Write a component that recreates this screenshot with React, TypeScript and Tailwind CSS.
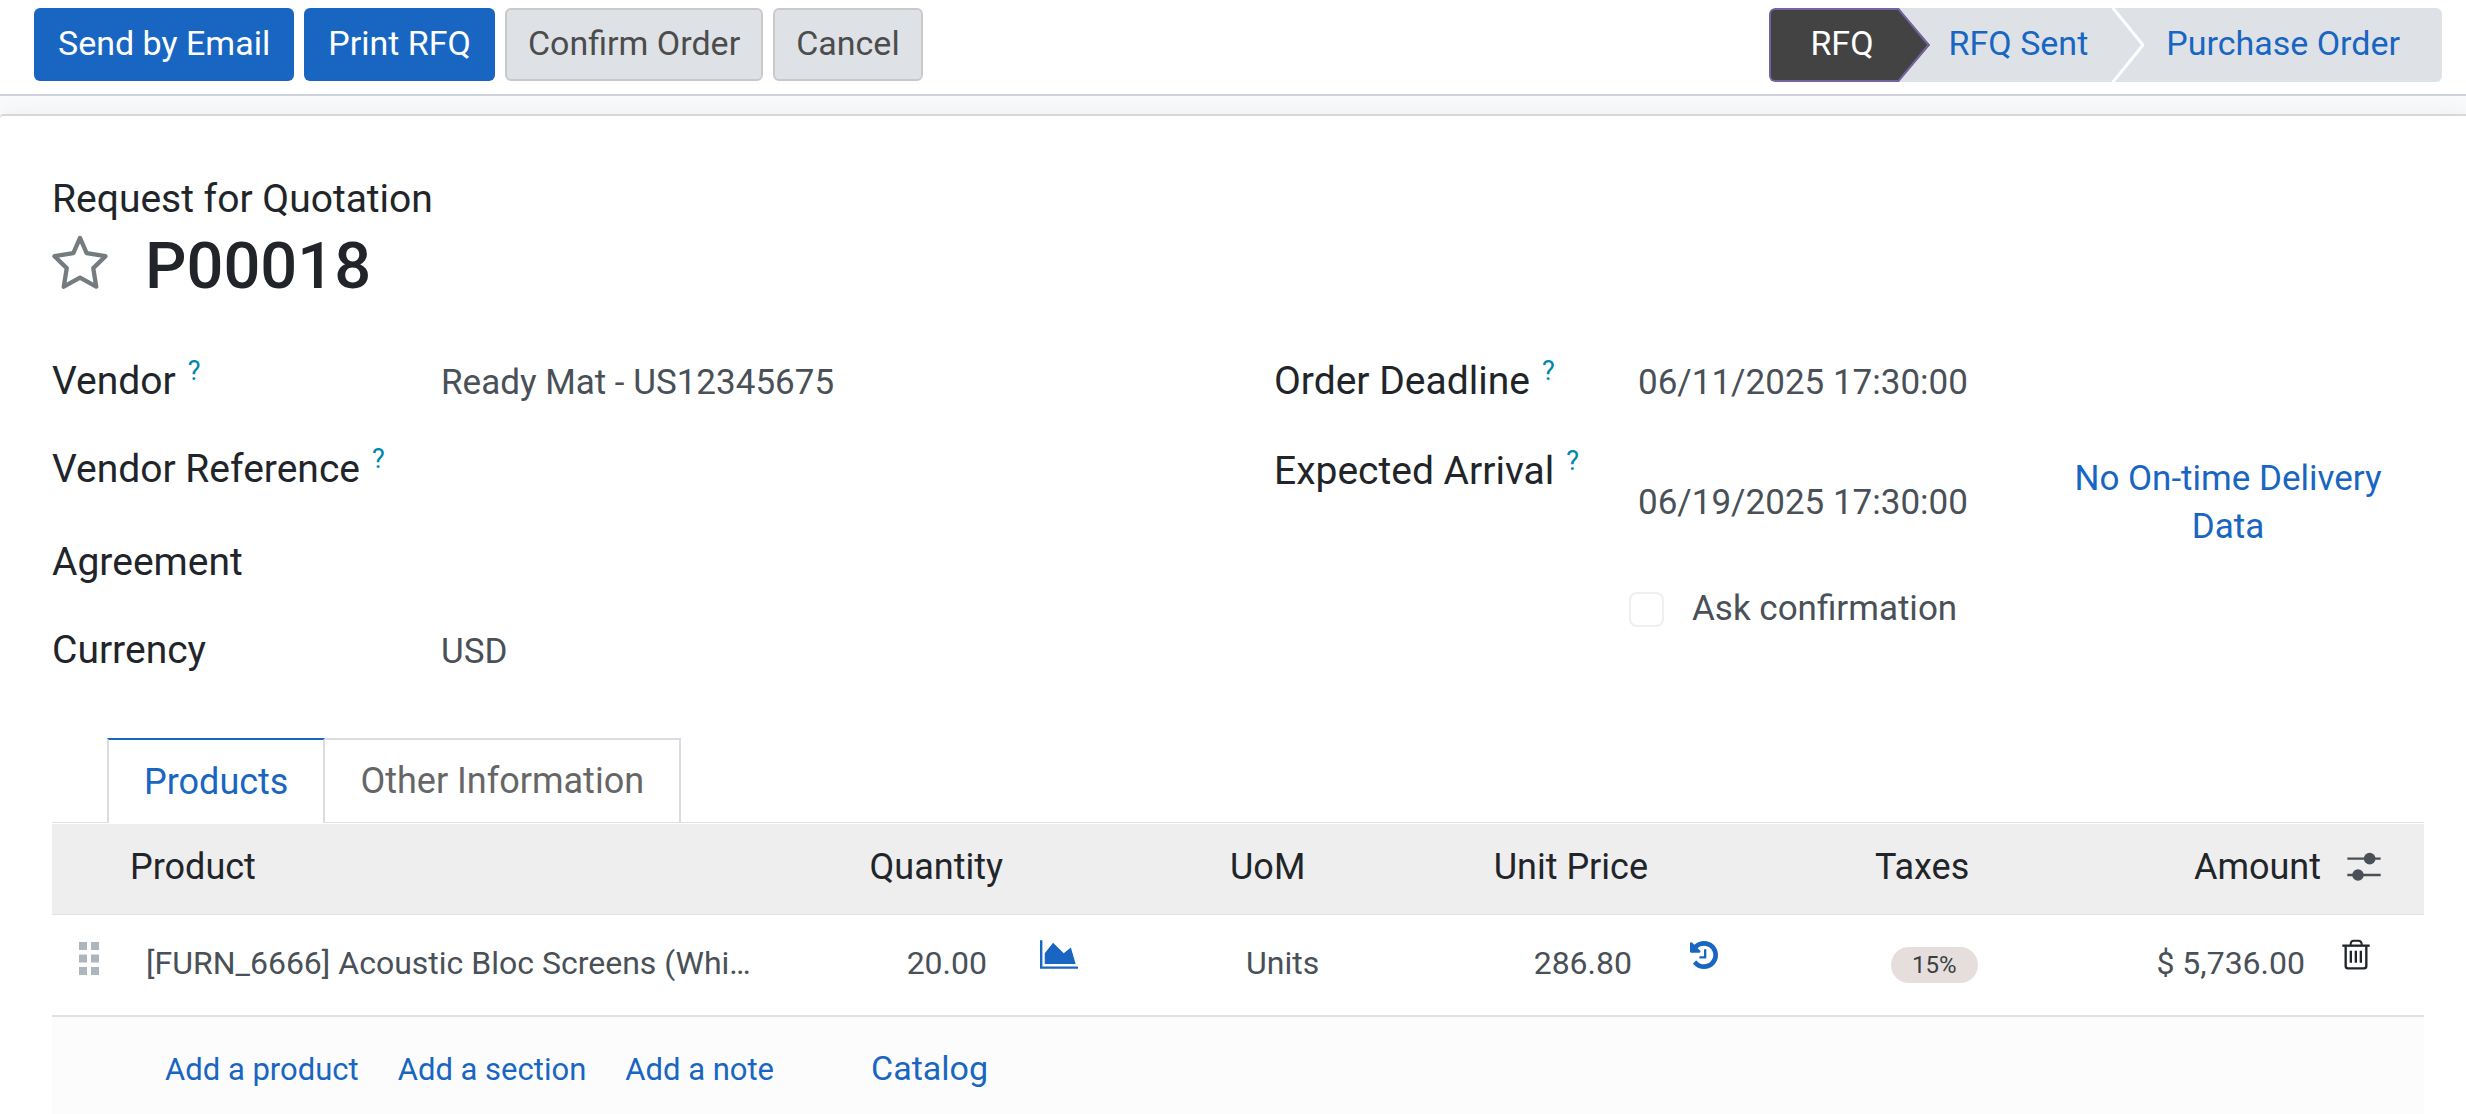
import type { ReactNode } from "react";

function StarIcon() {
  return (
    <svg viewBox="30 28 180 172" className="h-[57px] w-[60px]" aria-hidden="true">
      <path
        d="M120 43 L140 89 L197 98 L160 134 L169 190 L120 163 L71 190 L80 134 L43 98 L100 89 Z"
        fill="none"
        stroke="#757c80"
        strokeWidth="13"
        strokeLinejoin="round"
      />
    </svg>
  );
}

function AreaChartIcon() {
  return (
    <svg viewBox="0 128 2048 1536" className="h-[29px] w-[38px]" fill="currentColor" aria-hidden="true">
      <path d="M2048 1536v128h-2048v-1536h128v1408h1920zM1664 512l256 896h-1664v-576l448-576 576 576z" />
    </svg>
  );
}

function HistoryIcon() {
  return (
    <svg viewBox="0 128 1536 1536" className="size-7" fill="currentColor" aria-hidden="true">
      <path d="M1536 896q0 156-61 298t-164 245-245 164-298 61q-172 0-327-72.5t-264-204.5q-7-10-6.5-22.5t8.5-20.5l137-138q10-9 25-9 16 2 23 12 73 95 179 147t225 52q104 0 198.5-40.5t163.5-109.5 109.5-163.5 40.5-198.5-40.5-198.5-109.5-163.5-163.5-109.5-198.5-40.5q-98 0-188 35.5t-160 101.5l137 138q31 30 14 69-17 40-59 40h-448q-26 0-45-19t-19-45v-448q0-42 40-59 39-17 69 14l130 129q107-101 244.5-156.5t284.5-55.5q156 0 298 61t245 164 164 245 61 298zM896 608v448q0 14-9 23t-23 9h-320q-14 0-23-9t-9-23v-64q0-14 9-23t23-9h224v-352q0-14 9-23t23-9h64q14 0 23 9t9 23z" />
    </svg>
  );
}

function SlidersIcon() {
  return (
    <svg viewBox="54 28 102 90" className="h-[30px] w-[34px]" aria-hidden="true">
      <path d="M55 48H155M55 97H155" stroke="#495057" strokeWidth="7" />
      <circle cx="122" cy="48" r="17.5" fill="#495057" />
      <circle cx="87" cy="97" r="17.5" fill="#495057" />
    </svg>
  );
}

function TrashIcon() {
  return (
    <svg viewBox="35 286 84 93" className="h-[31px] w-7" fill="none" stroke="#212529" aria-hidden="true">
      <path d="M36 306H118" strokeWidth="7" />
      <path d="M61 304V300Q62 291 70 291H84Q93 291 94 300V304" strokeWidth="6" />
      <path d="M46 308V367Q46 374 53 374H101Q108 374 108 367V308" strokeWidth="7" />
      <path d="M61.500 321V357M76.500 321V357M91.500 321V357" strokeWidth="7" />
    </svg>
  );
}

function GripIcon() {
  return (
    <svg viewBox="0 0 20 33" className="h-[33px] w-5" fill="#adb5bd" aria-hidden="true">
      <path d="M0 0h8v8H0zM12 0h8v8h-8zM0 12.500h8v8H0zM12 12.500h8v8h-8zM0 25h8v8H0zM12 25h8v8h-8z" />
    </svg>
  );
}

function Help() {
  return <sup className="static ml-3 align-[14px] text-[27px] leading-none text-[#0086ad]">?</sup>;
}

function Field({ label, help, children, className = "min-h-[88px]" }: { label: string; help?: boolean; children?: ReactNode; className?: string }) {
  return (
    <div className={`flex items-baseline ${className}`}>
      <dt className="w-[389px] shrink-0 text-[39px] leading-12 text-[#212529]">
        {label}
        {help && <Help />}
      </dt>
      <dd className="flex-1">{children}</dd>
    </div>
  );
}

const primary = "h-[73px] rounded-md bg-[#1866c1] px-6 pb-1 text-white";
const secondary = "h-[73px] rounded-md border-2 border-[#c9c9c9] bg-[#dee2e6] px-[21px] pb-1 text-[#4c4c4c]";
const link = "text-[#1866c1]";

export default function App() {
  return (
    <div className="min-h-screen overflow-hidden bg-[#f9fafb] font-[Roboto,sans-serif] text-[35px] leading-12 text-[#495057]">
      <header className="flex items-start justify-between border-b-2 border-[#ced4da] bg-white pt-2 pr-6 pb-3 pl-[34px] text-[34px]">
        <div className="flex gap-[10px]">
          <button className={primary}>Send by Email</button>
          <button className={primary}>Print RFQ</button>
          <button className={secondary}>Confirm Order</button>
          <button className={secondary}>Cancel</button>
        </div>
        <div className="flex h-[74px] overflow-hidden rounded-md bg-[#dee2e6]">
          <button className="rounded-l-md border-2 border-r-0 border-[#7463a0] bg-[#434343] pr-6 pb-1 pl-[39px] text-white">RFQ</button>
          <svg viewBox="0 0 32 74" className="h-full w-8" aria-hidden="true">
            <path d="M0 0L32 37L0 74Z" fill="#434343" />
            <path d="M0 1H0.500L30.500 37L0.500 73H0" fill="none" stroke="#7463a0" strokeWidth="2" />
          </svg>
          <button className={`pr-6 pb-1 pl-[19px] ${link}`}>RFQ Sent</button>
          <svg viewBox="0 0 32 74" className="h-full w-8" aria-hidden="true">
            <path d="M0 -1L31 37L0 75" fill="none" stroke="#fff" strokeWidth="3" />
          </svg>
          <button className={`pr-[42px] pb-1 pl-[22px] ${link}`}>Purchase Order</button>
        </div>
      </header>

      <main className="mt-[18px] min-h-[1000px] rounded-tl-sm border-t-2 border-[#d6d7d8] bg-white pt-[59px] pr-[42px] pl-[52px] shadow-[0_0_24px_rgba(0,0,0,0.06)]">
        <p className="text-[39px] text-[#212529]">Request for Quotation</p>
        <div className="mt-[6px] flex items-start gap-[35px]">
          <button aria-label="Mark as priority" className="-ml-0.5 pt-1">
            <StarIcon />
          </button>
          <h1 className="text-[65px] leading-[74px] font-medium text-[#212529]">P00018</h1>
        </div>

        <div className="mt-[54px] grid grid-cols-2 gap-x-[72px]">
          <dl>
            <Field label="Vendor" help>Ready Mat - US12345675</Field>
            <Field label="Vendor Reference" help className="min-h-[93px]" />
            <Field label="Agreement" />
            <Field label="Currency" className="min-h-12">USD</Field>
          </dl>
          <dl>
            <div className="flex min-h-[90px] items-baseline">
              <dt className="w-[364px] shrink-0 text-[39px] text-[#212529]">Order Deadline<Help /></dt>
              <dd>06/11/2025 17:30:00</dd>
            </div>
            <div className="flex">
              <dt className="w-[364px] shrink-0 text-[39px] text-[#212529]">Expected Arrival<Help /></dt>
              <dd className="flex-1">
                <div className="flex items-center justify-between pt-2 pr-[31px]">
                  <span>06/19/2025 17:30:00</span>
                  <button className={`w-[330px] ${link}`}>No On-time Delivery Data</button>
                </div>
                <label className="mt-[34px] -ml-[9px] flex items-center gap-7">
                  <input type="checkbox" className="size-[35px] appearance-none rounded-lg border-2 border-[#efefef] bg-white" />
                  Ask confirmation
                </label>
              </dd>
            </div>
          </dl>
        </div>

        <div role="tablist" className="mt-[62px] flex border-b border-[#dee2e6] pl-[55px] text-[36px]">
          <button role="tab" aria-selected="true" className={`-mb-px h-[85px] border-x-2 border-t-2 border-x-[#dadce2] border-t-[#1866c1] bg-white px-[35px] ${link}`}>
            Products
          </button>
          <button role="tab" aria-selected="false" className="h-[84px] border-t-2 border-r-2 border-[#dadce2] px-[35px] text-[#666]">
            Other Information
          </button>
        </div>

        <table className="mt-px w-full table-fixed text-left text-[32px]">
          <colgroup>
            <col className="w-[66px]" />
            <col />
            <col className="w-[160px]" />
            <col className="w-[203px]" />
            <col className="w-[262px]" />
            <col className="w-[180px]" />
            <col className="w-[203px]" />
            <col className="w-[277px]" />
            <col className="w-[193px]" />
            <col className="w-[91px]" />
          </colgroup>
          <thead>
            <tr className="h-[90px] border-b border-[#dee2e6] bg-[#eee] text-[36px] text-[#212529] [&>th]:pb-1 [&>th]:font-normal [&>th]:whitespace-nowrap">
              <th aria-label="Reorder" />
              <th className="px-3">Product</th>
              <th className="px-3 text-right">Quantity</th>
              <th aria-label="Forecast" />
              <th className="px-3">UoM</th>
              <th className="px-3 text-right">Unit Price</th>
              <th aria-label="Price history" />
              <th className="px-3">Taxes</th>
              <th className="px-3 text-right">Amount</th>
              <th>
                <button aria-label="Optional columns" className="ml-3.5 block">
                  <SlidersIcon />
                </button>
              </th>
            </tr>
          </thead>
          <tbody>
            <tr className="h-[102px] border-b-2 border-[#dee2e6]">
              <td className="pb-3 pl-[27px]"><GripIcon /></td>
              <td className="truncate pb-1 pl-7">[FURN_6666] Acoustic Bloc Screens (Whi…</td>
              <td className="pr-7 pb-1 text-right">20.00</td>
              <td className="pb-5 pl-[25px]">
                <button aria-label="Forecast" className={`block ${link}`}><AreaChartIcon /></button>
              </td>
              <td className="pb-1 pl-7">Units</td>
              <td className="pr-7 pb-1 text-right">286.80</td>
              <td className="pb-5 pl-[30px]">
                <button aria-label="Purchase history" className={`block ${link}`}><HistoryIcon /></button>
              </td>
              <td className="pl-7">
                <span className="block w-fit rounded-full bg-[#e6dedd] px-[21px] text-2xl leading-9 text-[#3c3f42]">15%</span>
              </td>
              <td className="pr-7 pb-1 text-right whitespace-nowrap">$ 5,736.00</td>
              <td className="pb-5 pl-[9px]">
                <button aria-label="Delete row" className="block"><TrashIcon /></button>
              </td>
            </tr>
            <tr className="h-[104px] bg-[#fcfcfc]">
              <td />
              <td colSpan={9} className="pl-[47px]">
                <div className="flex items-baseline gap-[39px] text-[31px]">
                  <button className={link}>Add a product</button>
                  <button className={link}>Add a section</button>
                  <button className={link}>Add a note</button>
                  <button className={`ml-[58px] text-[34px] ${link}`}>Catalog</button>
                </div>
              </td>
            </tr>
          </tbody>
        </table>
      </main>
    </div>
  );
}
